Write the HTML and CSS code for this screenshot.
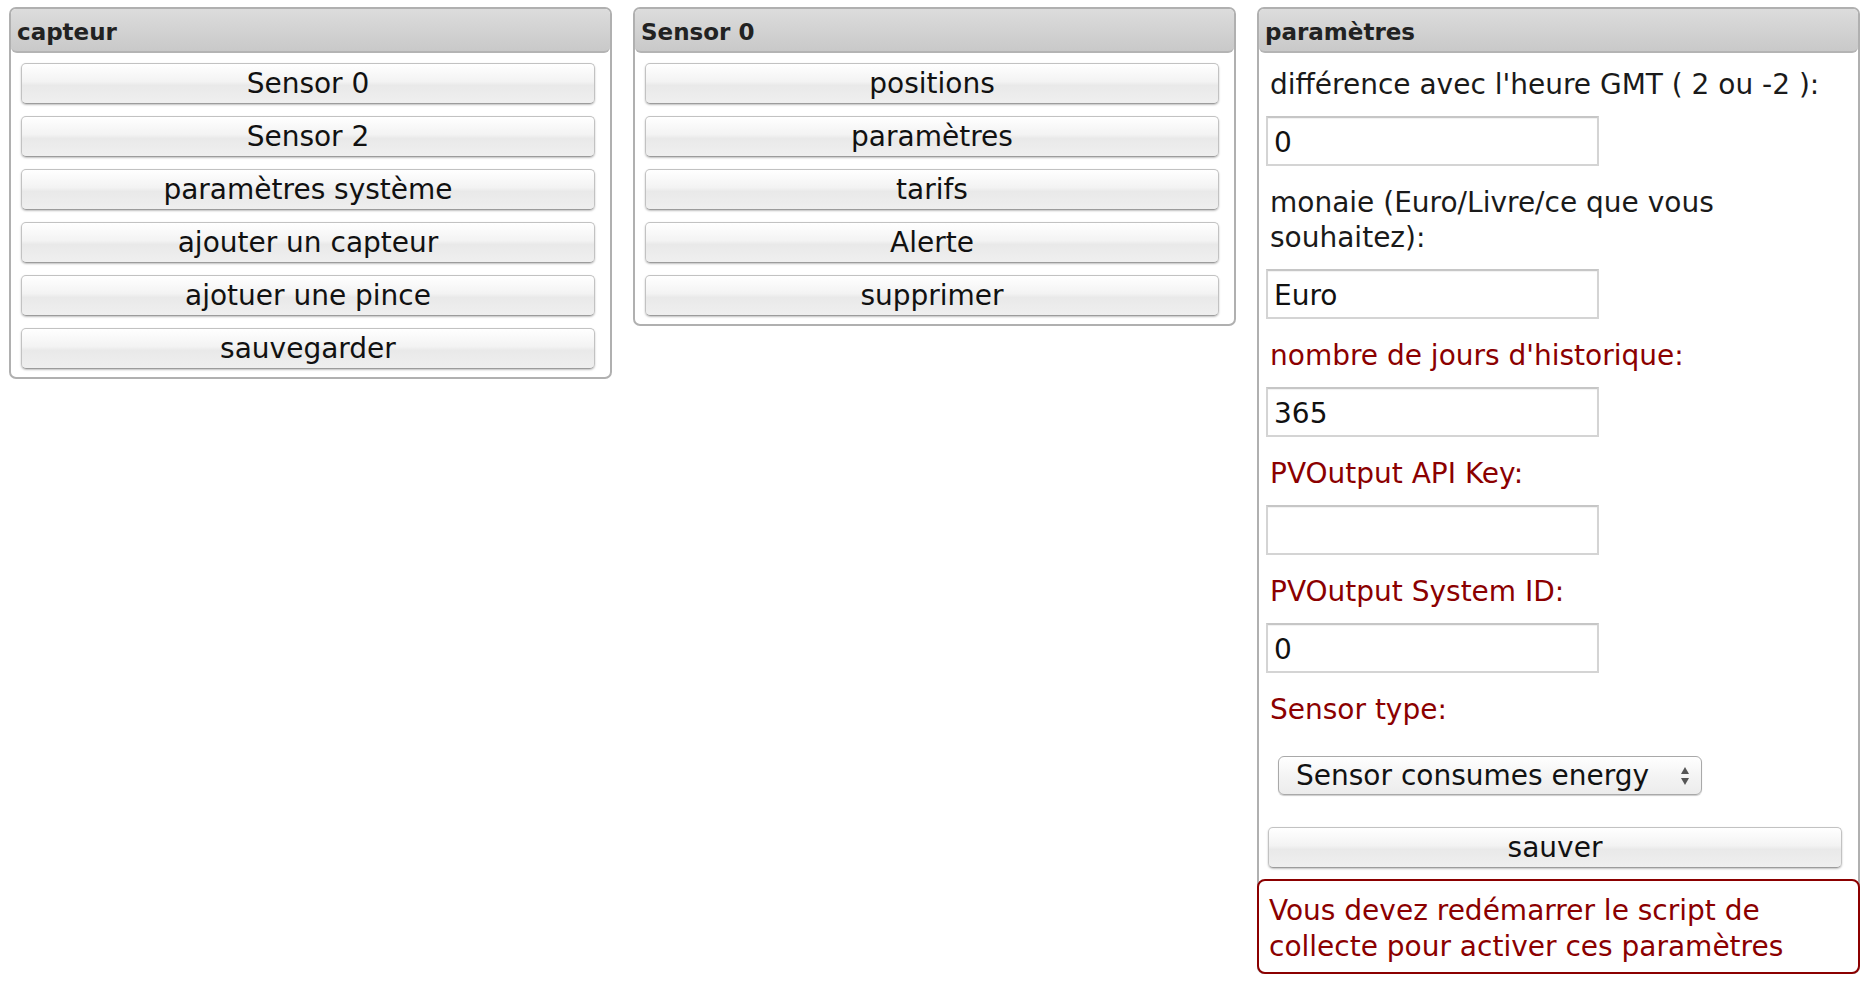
FILE: index.html
```html
<!DOCTYPE html>
<html lang="fr">
<head>
<meta charset="utf-8">
<title>capteur</title>
<link rel="stylesheet" href="styles.css">
</head>
<body>
<div class="columns">
  <section class="panel">
    <h3 class="panel-head">capteur</h3>
    <div class="btn-list">
      <button class="btn">Sensor 0</button>
      <button class="btn">Sensor 2</button>
      <button class="btn">paramètres système</button>
      <button class="btn">ajouter un capteur</button>
      <button class="btn">ajotuer une pince</button>
      <button class="btn">sauvegarder</button>
    </div>
  </section>
  <section class="panel">
    <h3 class="panel-head">Sensor 0</h3>
    <div class="btn-list">
      <button class="btn">positions</button>
      <button class="btn">paramètres</button>
      <button class="btn">tarifs</button>
      <button class="btn">Alerte</button>
      <button class="btn">supprimer</button>
    </div>
  </section>
  <section class="panel">
    <h3 class="panel-head">paramètres</h3>
    <div class="form">
      <label class="field-label">différence avec l'heure GMT ( 2 ou -2 ):</label>
      <input class="text-input" type="text" value="0">
      <label class="field-label">monaie (Euro/Livre/ce que vous souhaitez):</label>
      <input class="text-input" type="text" value="Euro">
      <label class="field-label warn">nombre de jours d'historique:</label>
      <input class="text-input" type="text" value="365">
      <label class="field-label warn">PVOutput API Key:</label>
      <input class="text-input" type="text" value="">
      <label class="field-label warn">PVOutput System ID:</label>
      <input class="text-input" type="text" value="0">
      <label class="field-label warn">Sensor type:</label>
      <div class="select-wrap">
        <select class="select"><option>Sensor consumes energy</option></select>
        <svg class="select-arrows" width="10" height="20" viewBox="0 0 10 20"><path d="M5 1 L9 8 L1 8 Z" fill="#555"/><path d="M1 12 L9 12 L5 19 Z" fill="#555"/></svg>
      </div>
      <button class="btn btn-save">sauver</button>
    </div>
    <div class="notice">Vous devez redémarrer le script de collecte pour activer ces paramètres</div>
  </section>
</div>
</body>
</html>
```
FILE: styles.css
```css
body {
  margin: 7px 0 0 9px;
  background: #fff;
  color: #111;
  font-family: "DejaVu Sans", Verdana, sans-serif;
  font-size: 28px;
}

.columns {
  display: flex;
  align-items: flex-start;
  gap: 21px;
}

.panel {
  width: 603px;
  box-sizing: border-box;
  border: 2px solid #b0b0b0;
  border-radius: 7px;
  background: #fff;
}

.panel-head {
  margin: 0;
  padding: 5px 6px 0;
  font-size: 23px;
  font-weight: bold;
  line-height: 37px;
  color: #222;
  background: linear-gradient(#dcdcdc, #c9c9c9);
  border-bottom: 2px solid #b4b4b4;
  border-radius: 5px 5px 6px 6px;
}

.btn-list {
  display: flex;
  flex-direction: column;
  gap: 12px;
  padding: 10px 0 8px 10px;
}

.btn {
  display: block;
  box-sizing: border-box;
  width: 574px;
  height: 41px;
  margin: 0;
  padding: 0;
  font: inherit;
  line-height: 39px;
  color: #111;
  text-align: center;
  border: 1px solid #c2c2c2;
  border-bottom-color: #9c9c9c;
  border-radius: 5px;
  background: linear-gradient(#ffffff, #f3f3f3 45%, #e9e9e9 55%, #efefef);
  box-shadow: 0 1px 2px rgba(0, 0, 0, 0.25);
}

.form {
  display: flex;
  flex-direction: column;
  align-items: flex-start;
  padding: 13px 0 0 7px;
}

.field-label {
  display: block;
  margin: 0 0 14px 4px;
  padding-top: 1px;
  line-height: 35px;
  color: #1a1a1a;
}

.field-label.warn {
  color: #8b0000;
}

.text-input {
  box-sizing: border-box;
  width: 333px;
  height: 50px;
  margin: 0 0 18px;
  padding: 2px 6px 0;
  font-family: inherit;
  font-size: 28px;
  color: #111;
  border: 2px solid #d4d4d4;
  border-top-color: #c6c6c6;
  box-shadow: inset 0 1px 1px rgba(0, 0, 0, 0.06);
  background: #fff;
  outline: none;
}

.select-wrap {
  position: relative;
  margin: 15px 0 0 12px;
}

.select {
  appearance: none;
  -webkit-appearance: none;
  display: block;
  box-sizing: border-box;
  width: 424px;
  height: 39px;
  margin: 0;
  padding: 0 0 0 17px;
  font-family: inherit;
  font-size: 28px;
  color: #111;
  border: 1px solid #a9a9a9;
  border-radius: 6px;
  background: linear-gradient(#ffffff, #f4f4f4 50%, #ececec);
  box-shadow: 0 1px 1px rgba(0, 0, 0, 0.2);
}

.select-arrows {
  position: absolute;
  right: 12px;
  top: 10px;
}

.btn-save {
  margin: 32px 0 0 2px;
}

.notice {
  margin: 11px -2px -2px -2px;
  padding: 12px 9px 7px 10px;
  line-height: 36px;
  color: #8b0000;
  border: 2px solid #8b0000;
  border-radius: 8px;
  background: #fff;
}
```
